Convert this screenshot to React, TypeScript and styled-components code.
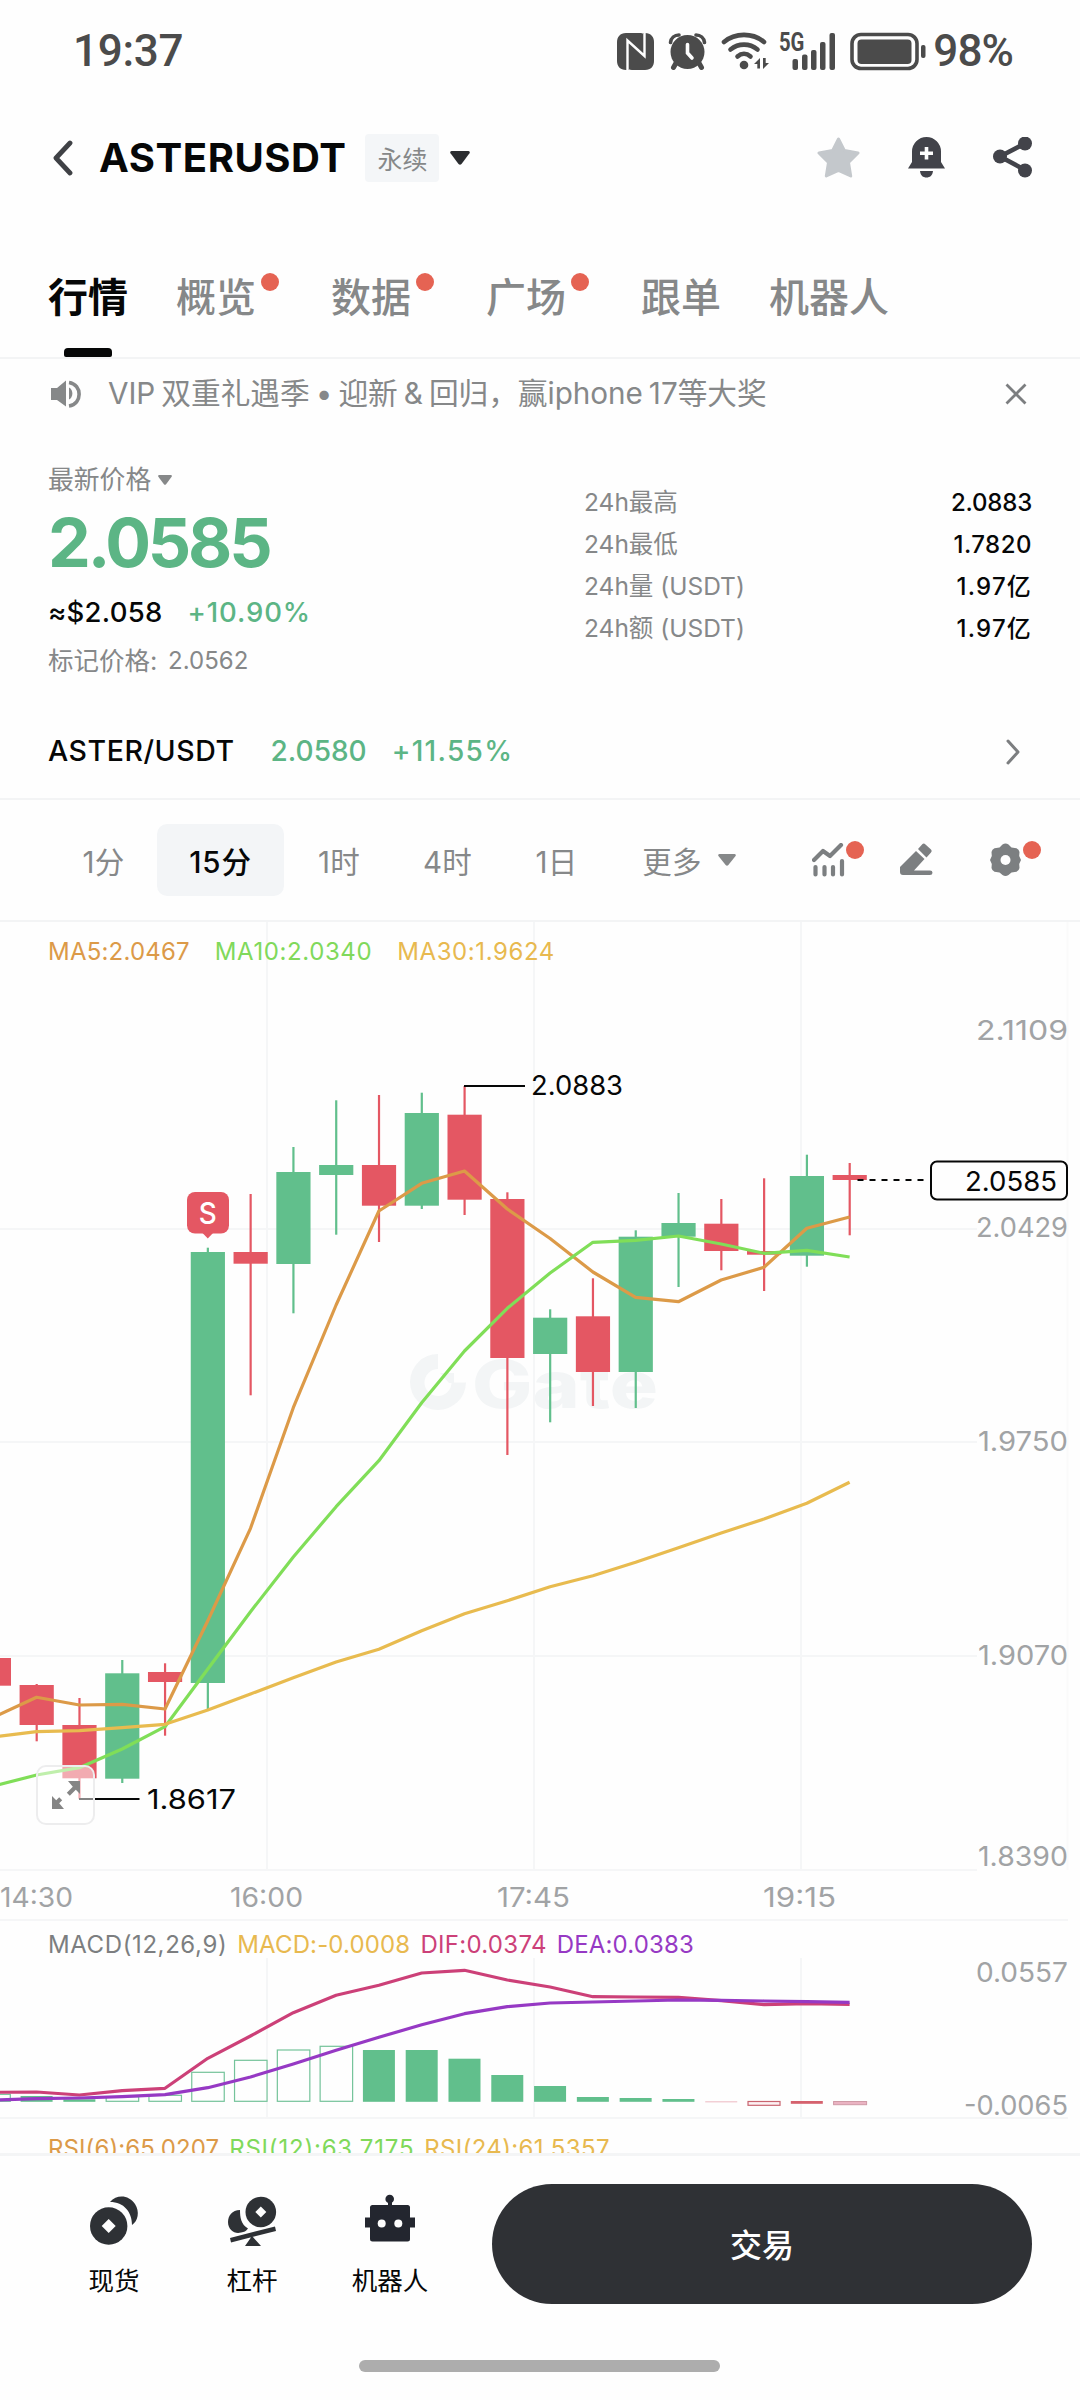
import React from "react";
import styled, { createGlobalStyle } from "styled-components";

const sans = `Inter, "Noto Sans CJK SC", sans-serif`;
const GREEN = "#5cb585";
const UP = "#61bf8c";
const DOWN = "#e45763";
const GRAY = "#868889";
const DOT = "#e56353";
const LINE = "#f3f4f5";

const GlobalStyle = createGlobalStyle`
  * { box-sizing: border-box; }
  body { margin: 0; background: #fefefe; }
`;

const Screen = styled.div`
  width: 1080px;
  height: 2400px;
  display: flex;
  flex-direction: column;
  overflow: hidden;
  background: #fefefe;
  color: #060707;
  font-family: ${sans};
  svg { display: block; flex: none; }
`;

const Row = styled.div<{ gap?: number; mt?: number }>`
  display: flex;
  align-items: center;
  gap: ${(p) => p.gap ?? 0}px;
  margin-top: ${(p) => p.mt ?? 0}px;
`;

const T = styled.span<{ size: number; color?: string; weight?: number; track?: number; words?: number; ml?: number }>`
  margin-left: ${(p) => p.ml ?? 0}px;
  font-size: ${(p) => p.size}px;
  line-height: 1.2;
  color: ${(p) => p.color ?? "#060707"};
  font-weight: ${(p) => p.weight ?? 400};
  letter-spacing: ${(p) => p.track ?? 0}px;
  word-spacing: ${(p) => p.words ?? 0}px;
  white-space: pre;
`;

/* ---------- status bar ---------- */
const StatusBar = styled.div`
  height: 100px;
  padding: 1px 67px 0 73px;
  display: flex;
  align-items: center;
  justify-content: space-between;
  font-family: Roboto, sans-serif;
  font-size: 44px;
  font-weight: 500;
  letter-spacing: -0.3px;
  color: #4b4b4b;
`;
const BatteryText = styled.span`
  letter-spacing: -0.9px;
  margin-left: 7px;
`;
const StatusIcons = styled.div`
  display: flex;
  align-items: center;
`;

const StatusGlyphs = () => (
  <svg width="310" height="50" viewBox="617 25 310 50" fill="#4b4b4b">
    <path d="M627 32h14c3 0 4 2 4 5v22l-14-12v21c-1 1-2 1-3 1h-1c-6 0-9-4-9-9V41c0-5 3-9 9-9z" />
    <path d="M646 32c6 0 9 4 9 9v19c0 5-3 9-9 9h-13c-3 0-4-2-4-4V43l13 12V37c0-2 1-4 2-5z" />
    <path d="M628.500 69V39.500l17 15.500V32" fill="none" stroke="#fefefe" strokeWidth="2.400" />
    <circle cx="688.500" cy="51" r="17" />
    <path d="M671.500 41.500c.5-4.500 4-7.500 8.500-7.500M705.500 41.500c-.5-4.500-4-7.500-8.500-7.500" fill="none" stroke="#4b4b4b" strokeWidth="3.600" strokeLinecap="round" />
    <path d="M677 62l-2.500 4.500M700 62l2.500 4.500" stroke="#4b4b4b" strokeWidth="5" strokeLinecap="round" />
    <path d="M688.500 43.500v8.500l4.500 5" fill="none" stroke="#fefefe" strokeWidth="3.600" strokeLinecap="round" />
    <g fill="none" stroke="#4b4b4b" strokeWidth="4.600" strokeLinecap="round">
      <path d="M725 41c11-9.500 29-9.500 40 0" />
      <path d="M731.500 48.500c8-6.500 19-6.500 27 0" />
      <path d="M738.500 55.500c4-3.500 9-3.500 13 0" />
    </g>
    <circle cx="745" cy="64" r="4.300" />
    <path d="M755 63l6-6v10.500h-2.700V63zM770 62l-6 6V57h2.700v5z" />
    <text x="780" y="50" fontSize="25" fontWeight="700" fontFamily="Roboto, sans-serif" textLength="25" lengthAdjust="spacingAndGlyphs">5G</text>
    <rect x="793.500" y="58" width="5.500" height="11" rx="2" />
    <rect x="803" y="53.500" width="5.500" height="15.500" rx="2" />
    <rect x="812" y="49" width="5.500" height="20" rx="2" />
    <rect x="821" y="41" width="5.500" height="28" rx="2" />
    <rect x="830.500" y="32" width="5.500" height="37" rx="2" />
    <rect x="853" y="33.500" width="65" height="34" rx="9" fill="none" stroke="#4b4b4b" strokeWidth="3.600" />
    <rect x="858.500" y="38.500" width="54" height="24.500" rx="4" />
    <rect x="922" y="44" width="4.500" height="13" rx="2" />
  </svg>
);

/* ---------- header ---------- */
const Header = styled.header`
  height: 114px;
  padding: 1px 47px 0 52px;
  display: flex;
  align-items: center;
  justify-content: space-between;
`;
const Badge = styled.span`
  width: 74px;
  height: 48px;
  margin: 0 11px 0 19px;
  display: flex;
  align-items: center;
  justify-content: center;
  border-radius: 4px;
  background: #f4f6f8;
  color: ${GRAY};
  font-size: 25px;
`;
const Title = styled.h1`
  margin: 0 0 0 26px;
  font-size: 40px;
  line-height: 48px;
  font-weight: 700;
  letter-spacing: 0.55px;
`;
const HeaderActions = styled.div`
  display: flex;
  align-items: center;
  gap: 48px;
`;
const Caret = ({ w, h, color }: { w: number; h: number; color: string }) => (
  <svg width={w} height={h} viewBox="0 0 20 13" preserveAspectRatio="none">
    <path d="M1.500 0h17q2 0.500 1 2.200l-8 9.800q-1.500 1.500-3 0l-8-9.800Q-.5.500 1.500 0z" fill={color} />
  </svg>
);

/* ---------- tabs ---------- */
const Tabs = styled.nav`
  height: 145px;
  padding: 0 48px;
  display: flex;
  gap: 48px;
  border-bottom: 2px solid ${LINE};
`;
const Tab = styled.div<{ $active?: boolean }>`
  position: relative;
  padding-top: 58px;
  display: flex;
  align-items: flex-start;
  font-size: 40px;
  line-height: 52px;
  font-weight: ${(p) => (p.$active ? 700 : 500)};
  color: ${(p) => (p.$active ? "#060707" : GRAY)};
  &::after {
    content: "";
    display: ${(p) => (p.$active ? "block" : "none")};
    position: absolute;
    left: 16px;
    bottom: 0;
    width: 48px;
    height: 9px;
    border-radius: 4px 4px 2px 2px;
    background: #060707;
  }
`;
const TabDot = styled.i`
  width: 18px;
  height: 18px;
  margin: 1px 4px 0 5px;
  border-radius: 50%;
  background: ${DOT};
`;

const Notice = styled.div`
  height: 68px;
  padding: 1px 53px 0 50px;
  display: flex;
  align-items: center;
  & > span { flex: 1; margin-left: 25px; }
`;

/* ---------- price ---------- */
const PriceSection = styled.section`
  height: 278px;
  padding: 0 48px;
  display: flex;
  justify-content: space-between;
`;
const PriceColumn = styled.div`
  padding-top: 38px;
  display: flex;
  flex-direction: column;
`;
const BigPrice = styled.div`
  margin-top: 5px;
  height: 82px;
  font-size: 68px;
  line-height: 82px;
  font-weight: 700;
  letter-spacing: -3.2px;
  color: ${GREEN};
`;
const Stats = styled.dl`
  width: 448px;
  margin: 55px 0 0;
`;
const Stat = styled.div`
  height: 42px;
  display: flex;
  align-items: center;
  justify-content: space-between;
`;
const PairRow = styled.div`
  height: 95px;
  padding: 0 59px 0 48px;
  display: flex;
  align-items: center;
  justify-content: space-between;
  border-bottom: 2px solid ${LINE};
`;

/* ---------- timeframes ---------- */
const Timeframes = styled.div`
  height: 122px;
  padding: 0 48px 0 50px;
  display: flex;
  align-items: center;
  border-bottom: 2px solid ${LINE};
`;
const Frame = styled.div<{ w: number; $active?: boolean }>`
  width: ${(p) => p.w}px;
  height: 72px;
  display: flex;
  align-items: center;
  justify-content: center;
  gap: 16px;
  border-radius: 10px;
  font-size: 29.5px;
  letter-spacing: ${(p) => (p.$active ? 0.8 : 0.3)}px;
  font-weight: ${(p) => (p.$active ? 500 : 400)};
  color: ${(p) => (p.$active ? "#060707" : GRAY)};
  background: ${(p) => (p.$active ? "#f3f5f7" : "transparent")};
`;
const Tool = styled.div<{ ml: number }>`
  position: relative;
  margin-left: ${(p) => p.ml}px;
`;
const ToolDot = styled.i`
  position: absolute;
  right: -18px;
  top: -2px;
  width: 18px;
  height: 18px;
  border-radius: 50%;
  background: ${DOT};
`;

/* ---------- charts ---------- */
const Panel = styled.section<{ h: number; $clip?: boolean }>`
  position: relative;
  height: ${(p) => p.h}px;
  flex: none;
  overflow: ${(p) => (p.$clip ? "hidden" : "visible")};
  & > svg { overflow: visible; }
`;
const Legend = styled.div<{ top: number; gap: number }>`
  position: absolute;
  left: 48px;
  top: ${(p) => p.top}px;
  display: flex;
  gap: ${(p) => p.gap}px;
`;
const Expand = styled.button`
  position: absolute;
  left: 36px;
  top: 843px;
  width: 59px;
  height: 60px;
  padding: 0;
  display: flex;
  align-items: center;
  justify-content: center;
  border: 2px solid #ededee;
  border-radius: 10px;
  background: rgba(255, 255, 255, 0.5);
`;

const cx = (i: number) => -6.2 + 42.79 * i;
const points = (ys: number[]) => ys.map((y, i) => `${cx(i).toFixed(1)},${y}`).join(" ");

type Candle = [up: boolean, high: number, top: number, bottom: number, low: number];
const candles: Candle[] = [
  [false, 1658, 1658, 1685.7, 1685.7],
  [false, 1684, 1685, 1725, 1741.3],
  [false, 1698, 1725, 1778.3, 1798.7],
  [true, 1660, 1673.3, 1778.7, 1783],
  [false, 1663.3, 1672, 1682, 1735.7],
  [true, 1247.7, 1252, 1683, 1709.3],
  [false, 1194, 1252, 1263.7, 1395.3],
  [true, 1147, 1172, 1264, 1313.3],
  [true, 1100.3, 1165, 1175, 1234.7],
  [false, 1095, 1165, 1205.7, 1242],
  [true, 1092.7, 1113, 1205.7, 1209],
  [false, 1086, 1114.7, 1199.7, 1215],
  [false, 1192.3, 1199, 1358, 1455],
  [true, 1309.3, 1317.7, 1354, 1422.3],
  [false, 1278.3, 1316.3, 1372, 1406],
  [true, 1230.3, 1236.7, 1372, 1408],
  [true, 1193, 1223, 1236.7, 1287],
  [false, 1199, 1223.7, 1251, 1270.3],
  [false, 1178.3, 1251, 1254.7, 1291],
  [true, 1154.7, 1176, 1255.7, 1266.7],
  [false, 1163, 1175, 1180, 1235.3],
];
const ma5 = [1717, 1697.3, 1705, 1704.3, 1709, 1620.7, 1528.3, 1407.7, 1305, 1211, 1183.3, 1171, 1209, 1238.5, 1272, 1297.3, 1301.7, 1280, 1267.3, 1228.3, 1217];
const ma10 = [1786, 1775, 1767.7, 1749, 1726.7, 1669, 1611.7, 1557, 1506.7, 1460.7, 1402.7, 1351, 1308.3, 1273, 1242.3, 1240.3, 1236, 1244, 1253.3, 1250.3, 1257];
const ma30 = [1737, 1731.7, 1730.7, 1727.7, 1724.3, 1710, 1694, 1677.7, 1662, 1649.3, 1630.7, 1613.7, 1600.7, 1586.7, 1575.7, 1562.3, 1547.7, 1533, 1519, 1503.3, 1482.3];
const dif = [2092.3, 2092, 2095, 2090.7, 2088.3, 2058.3, 2036, 2012.7, 1995.3, 1985.3, 1973, 1970.3, 1980, 1987, 1996.7, 1997, 1997.3, 2000.7, 2004.7, 2003.7, 2004.3];
const dea = [2100, 2098.7, 2098, 2096.7, 2094.7, 2087.7, 2077, 2064, 2050.3, 2037.3, 2024.7, 2013.7, 2006.7, 2003, 2002, 2001, 2000, 2000.3, 2001, 2001.7, 2002.3];
const bars: [top: number, filled: boolean][] = [
  [2094.3, false], [2096, true], [2099.3, true], [2096.7, false], [2095.3, false], [2072.3, false],
  [2060.3, false], [2050, false], [2046.3, false], [2050, true], [2050, true], [2058.7, true],
  [2075, true], [2086, true], [2097, true], [2098, true], [2099, true],
];
const priceLabels: [string, number][] = [["2.1109", 1040], ["2.0429", 1237], ["1.9750", 1451], ["1.9070", 1665], ["1.8390", 1866]];
const timeLabels: [string, number][] = [["14:30", 0], ["16:00", 230], ["17:45", 497], ["19:15", 763]];
const gridX = [267, 534, 801];

const Label = ({ x, y, w, color = "#a1a3a5", children }: { x: number; y: number; w: number; color?: string; children: string }) => (
  <text x={x} y={y} fontSize="27.500" fill={color} textLength={w} lengthAdjust="spacingAndGlyphs">{children}</text>
);

const PriceChart = () => (
  <svg width="1080" height="998" viewBox="0 922 1080 998" fontFamily={sans}>
    <g stroke="#f5f6f7" strokeWidth="2">
      {gridX.map((x) => <line key={x} x1={x} x2={x} y1="922" y2="1869" />)}
      {[1229, 1442, 1656, 1870].map((y) => <line key={y} x1="0" x2="977" y1={y} y2={y} />)}
      <line x1="1067.500" x2="1067.500" y1="922" y2="1870" stroke="#fafafa" />
      <line x1="0" x2="1068" y1="1920" y2="1920" />
    </g>
    <g fill="#f3f5f6">
      <path d="M438 1354v15a13.500 13.500 0 1 0 13.500 13.500H466a28 28 0 1 1-28-28.500z" />
      <path d="M440 1373h14v10h-5z" />
      <text x="472" y="1408" fontSize="66" fontWeight="800" textLength="186" lengthAdjust="spacingAndGlyphs">Gate</text>
    </g>
    {candles.map(([up, high, top, bottom, low], i) => (
      <g key={i} fill={up ? UP : DOWN}>
        <rect x={cx(i) - 1} y={high} width="2.200" height={low - high} />
        <rect x={cx(i) - 17} y={top} width="34.200" height={bottom - top} />
      </g>
    ))}
    <g fill="none" strokeWidth="3.200" strokeLinejoin="round">
      <polyline points={points(ma5)} stroke="#dc9a48" />
      <polyline points={points(ma10)} stroke="#80de58" />
      <polyline points={points(ma30)} stroke="#e8bb4f" />
    </g>
    {priceLabels.map(([t, y]) => <Label key={t} x={t[0] === "2" ? 976 : 978} y={y} w={t[0] === "2" ? 92 : 90}>{t}</Label>)}
    {timeLabels.map(([t, x]) => <Label key={t} x={x} y={1907} w={73}>{t}</Label>)}
    <g fill={DOWN}>
      <rect x="187" y="1192" width="42" height="41.500" rx="8" />
      <path d="M202.500 1233h10.500l-5.200 5.500z" />
    </g>
    <text x="207.800" y="1223.500" fontSize="30" fontWeight="500" fill="#fff" textAnchor="middle" textLength="18" lengthAdjust="spacingAndGlyphs">S</text>
    <g stroke="#060707" strokeWidth="2">
      <line x1="464" x2="525" y1="1086" y2="1086" />
      <line x1="79" x2="139.500" y1="1799" y2="1799" />
      <line x1="857.500" x2="926" y1="1180" y2="1180" strokeDasharray="6 6" />
      <rect x="931" y="1161.500" width="136" height="38" rx="6" fill="#fefefe" />
    </g>
    <Label x={531} y={1095} w={92} color="#060707">2.0883</Label>
    <Label x={147} y={1809} w={89} color="#060707">1.8617</Label>
    <Label x={965} y={1191} w={92} color="#060707">2.0585</Label>
  </svg>
);

const MacdChart = () => (
  <svg width="1080" height="199" viewBox="0 1920 1080 199" fontFamily={sans}>
    <g stroke="#f5f6f7" strokeWidth="2">
      {gridX.map((x) => <line key={x} x1={x} x2={x} y1="1958" y2="2117" />)}
      <line x1="0" x2="1068" y1="2118" y2="2118" />
    </g>
    {bars.map(([top, filled], i) =>
      filled ? (
        <rect key={i} x={cx(i) - 16} y={top} width="32" height={2101.8 - top} fill={UP} />
      ) : (
        <rect key={i} x={cx(i) - 16} y={top} width="32.500" height={2101.3 - top} fill="#fefefe" stroke="#74c39a" strokeWidth="1.200" />
      )
    )}
    <rect x={cx(17) - 16} y="2101" width="32" height="1.500" fill="#f2cfd5" />
    <rect x={cx(18) - 16} y="2101.500" width="32" height="3.800" fill="#fdf0f2" stroke="#c9646f" strokeWidth="1.200" />
    <rect x={cx(19) - 16} y="2101" width="32" height="2.800" fill="#d5626e" />
    <rect x={cx(20) - 16} y="2101.500" width="33" height="3.200" fill="#eab3c2" stroke="#cf9aa6" strokeWidth="1" />
    <g fill="none" strokeWidth="3.200" strokeLinejoin="round">
      <polyline points={points(dif)} stroke="#cc4078" />
      <polyline points={points(dea)} stroke="#9639c4" />
    </g>
    <Label x={976} y={1982} w={92}>0.0557</Label>
    <Label x={964} y={2114.5} w={104}>-0.0065</Label>
  </svg>
);

/* ---------- bottom bar ---------- */
const BottomBar = styled.footer`
  height: 178px;
  flex: none;
  padding: 28px 48px 0 45px;
  display: flex;
  align-items: flex-start;
  border-top: 3px solid #f4f5f6;
`;
const NavItem = styled.div`
  width: 138px;
  height: 120px;
  padding-top: 8px;
  display: flex;
  flex-direction: column;
  align-items: center;
  gap: 18px;
  font-size: 25.5px;
  line-height: 33px;
`;
const TradeButton = styled.button`
  flex: 1;
  height: 120px;
  margin-left: 33px;
  padding: 0 0 3px;
  border: 0;
  border-radius: 60px;
  background: #2f3135;
  color: #fff;
  font-family: ${sans};
  font-size: 32px;
  font-weight: 500;
`;
const HomeArea = styled.div`
  padding: 29px 1px 0 0;
  display: flex;
  justify-content: center;
`;
const HomeBar = styled.div`
  width: 361px;
  height: 12px;
  border-radius: 6px;
  background: #adadad;
`;

const INK = "#2e3135";

const stats: [label: string, value: string, track: number][] = [
  ["24h最高", "2.0883", -0.2],
  ["24h最低", "1.7820", 0.5],
  ["24h量 (USDT)", "1.97亿", 1.2],
  ["24h额 (USDT)", "1.97亿", 1.2],
];

export default function App() {
  return (
    <>
      <GlobalStyle />
      <Screen>
        <StatusBar>
          <span>19:37</span>
          <StatusIcons>
            <StatusGlyphs />
            <BatteryText>98%</BatteryText>
          </StatusIcons>
        </StatusBar>

        <Header>
          <Row>
            <svg width="21" height="36" viewBox="0 0 21 36">
              <path d="M18 3L4 18l14 15" fill="none" stroke="#3f4145" strokeWidth="4.800" strokeLinejoin="round" strokeLinecap="round" />
            </svg>
            <Title>ASTERUSDT</Title>
            <Badge>永续</Badge>
            <Caret w={20} h={14} color="#2b2d30" />
          </Row>
          <HeaderActions>
            <svg width="43" height="41" viewBox="817 136 43 41" fill="#c4c8cc" stroke="#c4c8cc" strokeWidth="3" strokeLinejoin="round">
              <path d="M838.500 138l5.800 11.500 13.700 2.500-9.500 9.500 2.200 13.500-12.200-5.500-12.200 5.500 2.200-13.500-9.500-9.500 13.700-2.500z" />
            </svg>
            <svg width="37" height="41" viewBox="907 136 37 41" fill="#42434a">
              <path d="M911 161v-10.500a14.500 14.500 0 0 1 29 0V161l4 6.500h-37zM919 170h13c-.5 4.500-3 6.500-6.500 6.500s-6-2-6.500-6.500z" />
              <path d="M925.500 146v12.500M919 152.200h13" stroke="#fefefe" strokeWidth="3.600" />
            </svg>
            <svg width="40" height="41" viewBox="993 136 40 41" fill="#42434a">
              <path d="M1025 142.500L1000 155.500l25 13.500" fill="none" stroke="#42434a" strokeWidth="4.600" />
              <circle cx="1025" cy="142.500" r="7" />
              <circle cx="1000" cy="155.500" r="7" />
              <circle cx="1025" cy="169.500" r="7" />
            </svg>
          </HeaderActions>
        </Header>

        <Tabs>
          <Tab $active>行情</Tab>
          <Tab>概览<TabDot /></Tab>
          <Tab>数据<TabDot /></Tab>
          <Tab>广场<TabDot /></Tab>
          <Tab>跟单</Tab>
          <Tab>机器人</Tab>
        </Tabs>

        <Notice>
          <svg width="33" height="28" viewBox="50 379 33 28" fill="#868889">
            <path d="M51 387h6l9-7.500v26L57 399h-6z" />
            <path d="M69 386.500c4.500 2 4.500 10 0 12z" />
            <path d="M69 381.500c13.500 2 13.500 21.500 0 23.500" fill="none" stroke="#868889" strokeWidth="3.600" />
          </svg>
          <T size={29.7} color={GRAY} track={-0.05} words={-2.2}>VIP 双重礼遇季 • 迎新 &amp; 回归，赢iphone 17等大奖</T>
          <svg width="22" height="22" viewBox="0 0 22 22">
            <path d="M1.500 1.500l19 19M20.500 1.500l-19 19" stroke="#7c7e80" strokeWidth="2.800" />
          </svg>
        </Notice>

        <PriceSection>
          <PriceColumn>
            <Row gap={7}>
              <T size={25.8} color={GRAY}>最新价格</T>
              <Caret w={14} h={10} color={GRAY} />
            </Row>
            <BigPrice>2.0585</BigPrice>
            <Row gap={25} mt={13}>
              <T size={27.5} weight={500} track={0.25}>≈$2.058</T>
              <T size={27.5} weight={500} track={0.9} color={GREEN}>+10.90%</T>
            </Row>
            <Row gap={4} mt={17}>
              <T size={25.5} color={GRAY}>标记价格:</T>
              <T size={24} color={GRAY}> 2.0562</T>
            </Row>
          </PriceColumn>
          <Stats>
            {stats.map(([k, v, track]) => (
              <Stat key={k}>
                <T size={24.5} color={GRAY}>{k}</T>
                <T size={24} weight={500} track={track}>{v}</T>
              </Stat>
            ))}
          </Stats>
        </PriceSection>

        <PairRow>
          <Row>
            <T size={28.5} weight={500} track={0.55}>ASTER/USDT</T>
            <T size={28} weight={500} color={GREEN} ml={36}>2.0580</T>
            <T size={28} weight={500} color={GREEN} track={1.3} ml={25}>+11.55%</T>
          </Row>
          <svg width="15" height="26" viewBox="0 0 15 26">
            <path d="M2 2l10 11L2 24" fill="none" stroke="#7c7e80" strokeWidth="3" strokeLinecap="round" strokeLinejoin="round" />
          </svg>
        </PairRow>

        <Timeframes>
          <Frame w={107}>1分</Frame>
          <Frame w={127} $active>15分</Frame>
          <Frame w={110}>1时</Frame>
          <Frame w={107}>4时</Frame>
          <Frame w={111}>1日</Frame>
          <Frame w={154}>
            更多
            <Caret w={18} h={12} color={GRAY} />
          </Frame>
          <Tool ml={46}>
            <svg width="34" height="34" viewBox="812 844 34 34" fill="none" stroke="#7c7f81" strokeWidth="4.200" strokeLinecap="round" strokeLinejoin="round">
              <path d="M814 861l9-9 7 5 11-11M815.500 868v7.500M824.500 868v7.500M833 868v7.500M842 862v13.500" />
            </svg>
            <ToolDot />
          </Tool>
          <Tool ml={54}>
            <svg width="34" height="34" viewBox="900 844 34 34" fill="#7c7f81">
              <path d="M916 852l8.500 8-10.500 11.500h16q2.500 0 2.500 2.200t-2.500 2.300h-27q-3 0-3-3v-5z" />
              <path d="M918 850l4.500-5q1.500-1 3 .5l5.500 5q1.500 1.500 0 3l-4.500 5z" />
            </svg>
          </Tool>
          <Tool ml={55}>
            <svg width="34" height="34" viewBox="989 844 34 34">
              <path d="M1002.500 845.500q3-2 6 0l3 3 5 .8q2.500 1 3 3.700l-.3 4 1.800 4-1.800 4 .3 4q-.5 2.700-3 3.700l-5 .8-3 2.500q-3 2-6 0l-3-2.500-5-.8q-2.500-1-3-3.700l.3-4-1.800-4 1.800-4-.3-4q.5-2.700 3-3.700l5-.8z" fill="#7c7f81" />
              <circle cx="1005.500" cy="861" r="5" fill="#fefefe" />
            </svg>
            <ToolDot />
          </Tool>
        </Timeframes>

        <Panel h={998}>
          <PriceChart />
          <Legend top={16} gap={25}>
            <T size={24} track={0.2} color="#dc9a48">MA5:2.0467</T>
            <T size={24} track={0.6} color="#80d95b">MA10:2.0340</T>
            <T size={24} track={0.6} color="#e8b94f">MA30:1.9624</T>
          </Legend>
          <Expand>
            <svg width="30" height="30" viewBox="0 0 30 30" fill="#858585">
              <path d="M29 1v13l-4.200-4.200-6 6-3-3 6-6L17 1zM1 29V16l4.200 4.200 3-3 3 3-3 3L13 29z" />
            </svg>
          </Expand>
        </Panel>
        <Panel h={199}>
          <MacdChart />
          <Legend top={11} gap={10}>
            <T size={24} track={0.6} color="#7c7e80">MACD(12,26,9)</T>
            <T size={24} track={0.15} color="#e8b94f">MACD:-0.0008</T>
            <T size={24} track={0.3} color="#cc4078">DIF:0.0374</T>
            <T size={24} track={0.15} color="#9639c4">DEA:0.0383</T>
          </Legend>
        </Panel>
        <Panel h={34} $clip>
          <Legend top={16} gap={10}>
            <T size={24} track={0.1} color="#dc9a48">RSI(6):65.0207</T>
            <T size={24} track={0.8} color="#80d95b">RSI(12):63.7175</T>
            <T size={24} track={0.35} color="#e8b94f">RSI(24):61.5357</T>
          </Legend>
        </Panel>

        <BottomBar>
          <NavItem>
            <svg width="52" height="54" viewBox="88 2192 52 54" fill={INK}>
              <path d="M110 2202c7-8 19-7 25 2 5 8 3 17-3 21 0-13-8-23-22-23z" />
              <circle cx="108.700" cy="2226" r="18.700" />
              <path d="M108.700 2219l7 7-7 7-7-7z" fill="#fefefe" />
            </svg>
            现货
          </NavItem>
          <NavItem>
            <svg width="52" height="54" viewBox="226 2192 52 54" fill={INK}>
              <circle cx="260.800" cy="2212" r="15.300" />
              <path d="M260.800 2206.500l5.500 5.500-5.500 5.500-5.500-5.500z" fill="#fefefe" />
              <path d="M240 2210c-8 0-12 6-12 12 0 8 7 12.500 13 10.500 3-.5 5-1 7-4-7-4-8-11-8-18.500z" />
              <path d="M230 2238l45-11.500 1 4.500-45 11.500zM252 2236l9 10h-16z" />
            </svg>
            杠杆
          </NavItem>
          <NavItem>
            <svg width="52" height="54" viewBox="364 2192 52 54" fill="#23262f">
              <circle cx="389.700" cy="2199" r="4.300" />
              <path d="M388 2200h4v7h-4zM365 2217.500h50v10h-50z" />
              <rect x="370" y="2205" width="40" height="36.500" rx="2.500" />
              <circle cx="381.700" cy="2223.500" r="4" fill="#fefefe" />
              <circle cx="398.300" cy="2223.500" r="4" fill="#fefefe" />
            </svg>
            机器人
          </NavItem>
          <TradeButton>交易</TradeButton>
        </BottomBar>
        <HomeArea><HomeBar /></HomeArea>
      </Screen>
    </>
  );
}
